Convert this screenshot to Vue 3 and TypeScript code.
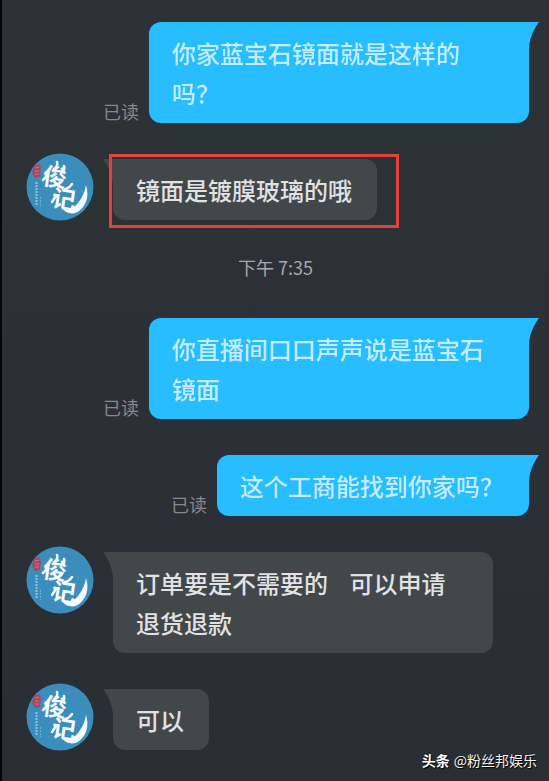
<script setup lang="ts">
interface Message {
  id: number
  kind: 'sent' | 'received' | 'time'
  text: string
  marked?: boolean
}

const messages: Message[] = [
  { id: 1, kind: 'sent', text: '你家蓝宝石镜面就是这样的吗？' },
  { id: 2, kind: 'received', text: '镜面是镀膜玻璃的哦', marked: true },
  { id: 3, kind: 'time', text: '下午 7:35' },
  { id: 4, kind: 'sent', text: '你直播间口口声声说是蓝宝石镜面' },
  { id: 5, kind: 'sent', text: '这个工商能找到你家吗？' },
  { id: 6, kind: 'received', text: '订单要是不需要的\u00a0\u00a0\u00a0 可以申请退货退款' },
  { id: 7, kind: 'received', text: '可以' },
]
</script>

<template>
  <main class="chat">
    <ol class="messages">
      <li v-for="m in messages" :key="m.id" class="row" :class="m.kind">
        <time v-if="m.kind === 'time'">{{ m.text }}</time>

        <template v-else-if="m.kind === 'sent'">
          <span class="status">已读</span>
          <div class="bubble">
            <p>{{ m.text }}</p>
            <svg class="tail" viewBox="0 0 11 26" aria-hidden="true">
              <path d="M0 0H11C7 6 2 13 1 26H0Z" />
            </svg>
          </div>
        </template>

        <template v-else>
          <svg class="avatar" viewBox="0 0 68 68" aria-hidden="true">
            <circle cx="34" cy="34" r="33.5" fill="#3b8dbb" />
            <path d="M8 13L13 11L15 14L14 24L9 25L6 20Z" fill="#a8485f" />
            <path d="M9 15L13 14M9 18L13 18M9 21L13 21" stroke="#c8768a" stroke-width="1" />
            <path d="M10.500 29V53" stroke="#8fc4de" stroke-width="2" stroke-dasharray="2 1" />
            <path d="M14.500 44V54" stroke="#6fafd0" stroke-width="1" stroke-dasharray="2 1" />
            <g class="brush">
              <text x="17" y="33" transform="rotate(8 29 24)">俊</text>
              <text x="26" y="55" transform="rotate(8 38 46)">记</text>
            </g>
            <path
              d="M60 32C62 39 62 45 59 51C55 58 49 62 44 60C41 60 38 58 37 56C43 57 48 55 52 50C56 45 59 39 60 32Z"
              fill="#f4fafd"
            />
            <path
              d="M31 9C32 12 31 14 28 16M38 13C39 16 38 18 35 20M21 23L17 27M46 31C44 34 41 36 37 37M30 43L26 49"
              fill="none"
              stroke="#f4fafd"
              stroke-width="2.500"
              stroke-linecap="round"
            />
          </svg>
          <div class="bubble">
            <svg class="tail" viewBox="0 0 11 26" aria-hidden="true">
              <path d="M11 0H0C4 6 9 13 10 26H11Z" />
            </svg>
            <p>{{ m.text }}</p>
            <span v-if="m.marked" class="mark"></span>
          </div>
        </template>
      </li>
    </ol>
    <footer class="credit"><strong>头条</strong><span>@粉丝邦娱乐</span></footer>
  </main>
</template>

<style>
body {
  margin: 0;
  background: #2a2f35;
}
</style>

<style scoped>
.chat {
  box-sizing: border-box;
  min-height: 100vh;
  display: flex;
  flex-direction: column;
  padding: 22px 0 11px;
  border-left: 2px solid #050607;
  background: linear-gradient(#2d3237, #2b3036 60%, #292d34);
  font-family: "Noto Sans CJK SC", "Noto Sans", sans-serif;
}

.messages {
  list-style: none;
  margin: 0;
  padding: 0;
  display: flex;
  flex-direction: column;
  gap: 36px;
}

.row {
  display: flex;
}

.sent {
  justify-content: flex-end;
  align-items: flex-end;
  gap: 10px;
  padding-right: 20px;
}

.received {
  align-items: flex-start;
  gap: 19px;
  padding-left: 24px;
}

.time {
  justify-content: center;
  padding-bottom: 4px;
  color: #a6a9ac;
  font-size: 18px;
  line-height: 22px;
}

.status {
  flex: none;
  color: #85898c;
  font-size: 18px;
  line-height: 24px;
}

.bubble {
  position: relative;
  box-sizing: border-box;
  max-width: 380px;
  padding: 11px 25px 10px 23px;
  font-size: 24px;
  line-height: 40px;
}

.bubble p {
  margin: 0;
}

.sent .bubble {
  border-radius: 12px 0 12px 12px;
  background: #27bdff;
  color: #c3edff;
  font-weight: 500;
  filter: drop-shadow(0 0 1px #06406c);
}

.received .bubble {
  border-radius: 0 12px 12px 12px;
  background: #42474a;
  color: #e0e2e3;
  font-weight: 500;
}

.tail {
  position: absolute;
  top: 0;
  width: 11px;
  height: 26px;
}

.sent .tail {
  left: calc(100% - 1px);
  fill: #27bdff;
}

.received .tail {
  right: calc(100% - 1px);
  fill: #42474a;
}

.avatar {
  flex: none;
  width: 68px;
  height: 68px;
  margin-top: -6px;
  margin-bottom: -1px;
}

.brush {
  fill: #f4fafd;
  font-family: "Noto Sans CJK SC", sans-serif;
  font-size: 24px;
  font-weight: 700;
}

.mark {
  position: absolute;
  inset: -5px -22px -8px -4px;
  border: 3px solid #e5403f;
}

.credit {
  display: flex;
  justify-content: flex-end;
  gap: 4px;
  margin-top: auto;
  padding-right: 12px;
  color: #f2f2f2;
  font-size: 14px;
  line-height: 20px;
  text-shadow: 1px 1px 1px #000;
}

.credit strong {
  color: #fff;
  font-weight: 700;
}
</style>
